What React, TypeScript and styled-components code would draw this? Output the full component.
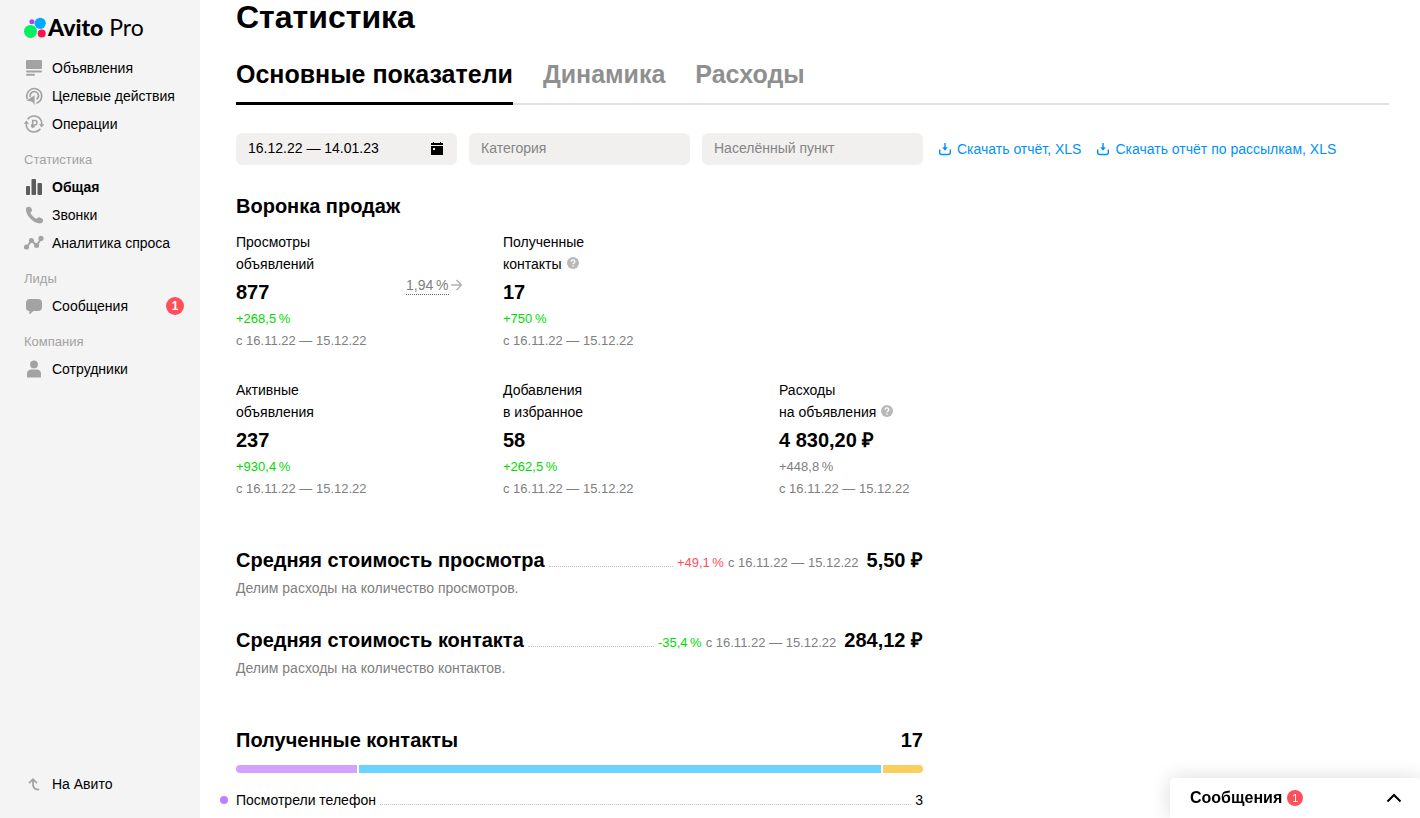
import React from "react";
import styled, { createGlobalStyle, css } from "styled-components";

const GlobalStyle = createGlobalStyle`
  *, *::before, *::after { box-sizing: border-box; }
  body {
    margin: 0;
    background: #fff;
    color: #000;
    font-family: "Liberation Sans", Arial, sans-serif;
    font-size: 14px;
    line-height: 22px;
  }
  h1, h2, p, ul, dl, dd { margin: 0; padding: 0; }
  ul { list-style: none; }
  a { color: inherit; text-decoration: none; }
  button, input { font: inherit; color: inherit; }
`;

const Page = styled.div`
  display: flex;
  min-height: 100vh;
`;

/* ---------- sidebar ---------- */

const Sidebar = styled.aside`
  position: sticky;
  top: 0;
  display: flex;
  flex-direction: column;
  flex: none;
  width: 200px;
  height: 100vh;
  padding: 14px 16px 20px 24px;
  background: #f4f4f4;
`;

const Logo = styled.a`
  display: flex;
  align-items: center;
  gap: 1px;
  height: 28px;
  margin-bottom: 12px;
  font: 400 23px/26px Lato, sans-serif;
  white-space: pre;

  span { height: 28px; }
  b { font-weight: 900; }
`;

const NavTitle = styled.h2`
  height: 35px;
  padding-top: 8px;
  color: #a3a3a3;
  font-size: 13px;
  font-weight: 400;
  line-height: 28px;
`;

const NavLink = styled.a<{ $active?: boolean }>`
  display: flex;
  align-items: center;
  gap: 8px;
  height: 28px;
  font-weight: ${(p) => (p.$active ? 700 : 400)};

  svg { flex: none; color: ${(p) => (p.$active ? "#5c5c5c" : "#a3a3a3")}; }
`;

const NavBottom = styled.div`
  margin-top: auto;
`;

const Badge = styled.span<{ $small?: boolean }>`
  display: inline-block;
  flex: none;
  width: ${(p) => (p.$small ? 16 : 18)}px;
  border-radius: 50%;
  background: #ff4f5a;
  color: #fff;
  font-size: ${(p) => (p.$small ? 11 : 12)}px;
  font-weight: ${(p) => (p.$small ? 400 : 700)};
  line-height: ${(p) => (p.$small ? 16 : 18)}px;
  text-align: center;
`;

const PushedBadge = styled(Badge)`
  margin-left: auto;
`;

/* ---------- main ---------- */

const Main = styled.main`
  flex: 1;
  min-width: 0;
  padding: 0 31px 7px 36px;
`;

const Title = styled.h1`
  margin-bottom: 24px;
  font-size: 32px;
  line-height: 34px;
`;

const Tabs = styled.nav`
  display: flex;
  gap: 30px;
  margin-bottom: 28px;
  border-bottom: 2px solid #e0e0e0;
`;

const Tab = styled.a<{ $active?: boolean }>`
  margin-bottom: -2px;
  padding-bottom: 12px;
  border-bottom: 3px solid ${(p) => (p.$active ? "#000" : "transparent")};
  color: ${(p) => (p.$active ? "#000" : "#8f8f8f")};
  font-size: 25px;
  font-weight: 700;
  line-height: 32px;
`;

const FilterBar = styled.form`
  display: flex;
  align-items: center;
  gap: 12px;
  margin-bottom: 27px;
`;

const Field = styled.label`
  display: flex;
  align-items: center;
  width: 221px;
  height: 32px;
  padding: 0 12px;
  border-radius: 6px;
  background: #f1f0ef;

  input {
    flex: 1;
    min-width: 0;
    height: 30px;
    padding: 0 0 2px;
    border: 0;
    outline: 0;
    background: none;
  }
  input::placeholder { color: #858585; opacity: 1; }
`;

const Downloads = styled.div`
  display: flex;
  gap: 15px;
  margin-left: 3px;
`;

const Download = styled.a`
  display: flex;
  align-items: center;
  gap: 5px;
  color: #0091fa;
  white-space: nowrap;
`;

const Content = styled.div`
  width: 687px;
`;

const Heading = styled.h2`
  font-size: 20px;
  line-height: 28px;
`;

const Funnel = styled.div`
  display: grid;
  grid-template-columns: 170px 97px 276px 1fr;
  row-gap: 28px;
  margin: 11px 0 47px;
`;

const MetricBox = styled.dl<{ $column: number }>`
  grid-column: ${(p) => p.$column};
  white-space: nowrap;
`;

const MetricLabel = styled.dt`
  svg { margin-left: 5px; }
`;

const Value = styled.dd`
  height: 32px;
  font-size: 20px;
  font-weight: 700;
  line-height: 34px;
`;

type Tone = "good" | "bad" | "neutral";
const tones: Record<Tone, string> = {
  good: "#00d900",
  bad: "#ff4f5a",
  neutral: "#808080",
};

const note = css`
  color: #808080;
  font-size: 13px;
`;

const Delta = styled.span<{ $tone: Tone }>`
  color: ${(p) => tones[p.$tone]};
  font-size: 13px;
`;

const Period = styled.span`
  ${note}
`;

const Stacked = styled.dd`
  height: 22px;
`;

const Conversion = styled.div`
  display: flex;
  align-items: center;
  gap: 2px;
  align-self: start;
  height: 18px;
  margin-top: 45px;
  color: #808080;

  abbr {
    border-bottom: 1px dotted #666;
    line-height: 18px;
    text-decoration: none;
  }
  svg { flex: none; }
`;

const Cost = styled.section`
  margin-bottom: 27px;
`;

const CostRow = styled.div`
  display: flex;
  align-items: baseline;
  margin-bottom: 3px;
  white-space: nowrap;

  ${Delta} { margin-right: 4px; }
  ${Period} { margin-right: 8px; }
`;

const Leader = styled.span`
  flex: 1;
  margin: 0 4px;
  border-bottom: 1px dotted #c2c2c2;
`;

const Total = styled.strong`
  font-size: 20px;
  line-height: 28px;
`;

const Description = styled.p`
  color: #808080;
`;

const Contacts = styled.section`
  margin-top: 47px;
`;

const ContactsHead = styled.div`
  display: flex;
  justify-content: space-between;
`;

const Bar = styled.div`
  display: flex;
  gap: 2px;
  height: 8px;
  margin: 11px 0 16px;
  border-radius: 4px;
  overflow: hidden;
`;

const Segment = styled.span<{ $share: number; $color: string }>`
  flex: ${(p) => p.$share} 0 0;
  background: ${(p) => p.$color};
`;

const LegendRow = styled.li`
  display: flex;
  align-items: baseline;
  margin-left: -16px;
`;

const Dot = styled.i`
  align-self: center;
  width: 8px;
  height: 8px;
  margin-right: 8px;
  border-radius: 50%;
  background: #c17fff;
`;

/* ---------- chat widget ---------- */

const Chat = styled.button`
  position: fixed;
  right: 0;
  bottom: 0;
  display: flex;
  align-items: center;
  gap: 5px;
  width: 250px;
  height: 40px;
  padding: 0 18px 0 20px;
  border: 0;
  border-radius: 4px 4px 0 0;
  background: #fff;
  box-shadow: 0 0 20px rgba(0, 0, 0, 0.15);
  font-size: 16px;
  font-weight: 700;
  cursor: pointer;

  svg { margin-left: auto; }
`;

/* ---------- icons ---------- */

const icons = {
  ads: (
    <g fill="currentColor">
      <rect x="2" y="2" width="16" height="9" rx="1" />
      <rect x="2" y="12.4" width="16" height="2" rx="1" />
      <rect x="2" y="15.8" width="9" height="2" rx="1" />
    </g>
  ),
  target: (
    <g fill="none" stroke="currentColor" strokeWidth="1.700" strokeLinecap="round">
      <path d="M3.200 12.500A7.500 7.500 0 1 1 13 17" />
      <path d="M6.300 10.500A4.100 4.100 0 1 1 13 12.800" />
      <path d="M10.600 9.200V19l-2.400-3.200-5.700-1.300Z" fill="currentColor" stroke="none" />
    </g>
  ),
  operations: (
    <g fill="none" stroke="currentColor" strokeWidth="1.600">
      <path d="M3.600 5.200A8 8 0 0 1 17.600 7.500" />
      <path d="M16.400 14.800A8 8 0 0 1 2.400 12.500V9" />
      <path d="M17.600 7.500V11" />
      <path d="M8.700 14V6.500h2.100a2.200 2.200 0 0 1 0 4.400H7M7 12.600h3.800" strokeWidth="1.500" />
      <path d="M15 10.200h5.200l-2.600 3.200zM-.2 9.800H5L2.400 6.600z" fill="currentColor" stroke="none" />
    </g>
  ),
  bars: (
    <g fill="currentColor">
      <rect x="2" y="9" width="4" height="9" rx="1" />
      <rect x="7.500" y="2" width="4.500" height="16" rx="1" />
      <rect x="13.500" y="6" width="4.500" height="12" rx="1" />
    </g>
  ),
  phone: (
    <path
      fill="currentColor"
      d="M2 3.500C2.300 2 4.500 1.400 5.900 1.700c.9.300 2.400 3.100 2.200 4-.2.900-1.500 1.300-1.600 2.100-.1 1.400 4.600 6 6 6 .9 0 1.300-1.500 2.200-1.600.9-.1 4.300 1.500 4.400 2.500.2 1.300-.6 3.400-2.200 3.600C9.900 19.300 1.200 10.300 2 3.500Z"
    />
  ),
  demand: (
    <g fill="currentColor">
      <path d="M2.500 14.500 7.500 7.500l5 5L17 6" fill="none" stroke="currentColor" strokeWidth="2" />
      <circle cx="2.500" cy="14" r="2.600" />
      <circle cx="7.400" cy="7.400" r="2.500" />
      <circle cx="12.600" cy="12.400" r="2.500" />
      <circle cx="17" cy="5.400" r="2.600" />
    </g>
  ),
  message: (
    <path
      fill="currentColor"
      d="M6 3h8a4 4 0 0 1 4 4v4a4 4 0 0 1-4 4H9.500L6 18q-1 .5-.8-.6L5.500 15A3.700 3.700 0 0 1 2 11V7a4 4 0 0 1 4-4Z"
    />
  ),
  person: (
    <g fill="currentColor">
      <circle cx="10" cy="5.400" r="3.900" />
      <path d="M3 18.500V15q0-4.500 4.500-4.500h5Q17 10.500 17 15v3.500Z" />
    </g>
  ),
  back: (
    <path
      d="M5 9.200 9 5.200l4 4M9 6v4.500q0 5 6.200 5.200"
      fill="none"
      stroke="currentColor"
      strokeWidth="1.800"
    />
  ),
};

const NavIcon = ({ name }: { name: keyof typeof icons }) => (
  <svg width="20" height="20" viewBox="0 0 20 20" overflow="visible" aria-hidden="true">
    {icons[name]}
  </svg>
);

const HelpIcon = () => (
  <svg width="12" height="12" viewBox="0 0 12 12" role="img" aria-label="Подсказка">
    <circle cx="6" cy="6" r="6" fill="#b8b8b8" />
    <path d="M4.200 4.700a1.800 1.700 0 1 1 2.700 1.400q-.9.500-.9 1.100" fill="none" stroke="#fff" strokeWidth="1.300" />
    <circle cx="6" cy="9" r=".8" fill="#fff" />
  </svg>
);

const DownloadIcon = () => (
  <svg width="14" height="14" viewBox="0 0 14 14" aria-hidden="true" fill="none" stroke="currentColor" strokeWidth="1.400">
    <path d="M1.700 7.500v3q0 2 2 2h6.600q2 0 2-2v-3M7 1v5" />
    <path d="M4.200 5.200h5.600L7 8.800Z" fill="currentColor" stroke="none" />
  </svg>
);

const CalendarIcon = () => (
  <svg width="16" height="16" viewBox="0 0 16 16" aria-hidden="true">
    <path
      fillRule="evenodd"
      d="M2 2h2V1h1v1h6V1h1v1h2v2H2ZM2 5h12v9H2ZM4 7v2h2V7Z"
    />
  </svg>
);

/* ---------- parts ---------- */

const PERIOD = "с 16.11.22 — 15.12.22";

type MetricProps = {
  column: number;
  label: [string, string];
  value: string;
  delta: string;
  tone?: Tone;
  help?: boolean;
};

const Metric = ({ column, label, value, delta, tone = "good", help }: MetricProps) => (
  <MetricBox $column={column}>
    <MetricLabel>
      {label[0]}
      <br />
      {label[1]}
      {help && <HelpIcon />}
    </MetricLabel>
    <Value>{value}</Value>
    <Stacked>
      <Delta $tone={tone}>{delta}</Delta>
    </Stacked>
    <Stacked>
      <Period>{PERIOD}</Period>
    </Stacked>
  </MetricBox>
);

type AverageProps = { title: string; delta: string; tone: Tone; total: string; text: string };

const Average = ({ title, delta, tone, total, text }: AverageProps) => (
  <Cost>
    <CostRow>
      <Heading>{title}</Heading>
      <Leader />
      <Delta $tone={tone}>{delta}</Delta>
      <Period>{PERIOD}</Period>
      <Total>{total}</Total>
    </CostRow>
    <Description>{text}</Description>
  </Cost>
);

export default function App() {
  return (
    <>
      <GlobalStyle />
      <Page>
        <Sidebar>
          <Logo href="#">
            <svg width="23" height="22" viewBox="0 0 23 22" aria-hidden="true">
              <circle cx="7.900" cy="4.700" r="2.500" fill="#a347ff" />
              <circle cx="16.200" cy="6.300" r="5.600" fill="#00aaff" />
              <circle cx="6.500" cy="14.400" r="6.500" fill="#04f061" />
              <circle cx="17.700" cy="16.400" r="4" fill="#ff1053" />
            </svg>
            <span>
              <b>Avito</b> Pro
            </span>
          </Logo>
          <nav>
            <NavLink href="#"><NavIcon name="ads" />Объявления</NavLink>
            <NavLink href="#"><NavIcon name="target" />Целевые действия</NavLink>
            <NavLink href="#"><NavIcon name="operations" />Операции</NavLink>
            <NavTitle>Статистика</NavTitle>
            <NavLink href="#" $active aria-current="page"><NavIcon name="bars" />Общая</NavLink>
            <NavLink href="#"><NavIcon name="phone" />Звонки</NavLink>
            <NavLink href="#"><NavIcon name="demand" />Аналитика спроса</NavLink>
            <NavTitle>Лиды</NavTitle>
            <NavLink href="#">
              <NavIcon name="message" />Сообщения
              <PushedBadge>1</PushedBadge>
            </NavLink>
            <NavTitle>Компания</NavTitle>
            <NavLink href="#"><NavIcon name="person" />Сотрудники</NavLink>
          </nav>
          <NavBottom>
            <NavLink href="#"><NavIcon name="back" />На Авито</NavLink>
          </NavBottom>
        </Sidebar>

        <Main>
          <Title>Статистика</Title>
          <Tabs>
            <Tab href="#" $active aria-current="page">Основные показатели</Tab>
            <Tab href="#">Динамика</Tab>
            <Tab href="#">Расходы</Tab>
          </Tabs>

          <FilterBar>
            <Field>
              <input type="text" aria-label="Период" defaultValue="16.12.22 — 14.01.23" />
              <CalendarIcon />
            </Field>
            <Field>
              <input type="text" aria-label="Категория" placeholder="Категория" />
            </Field>
            <Field>
              <input type="text" aria-label="Населённый пункт" placeholder="Населённый пункт" />
            </Field>
            <Downloads>
              <Download href="#"><DownloadIcon />Скачать отчёт, XLS</Download>
              <Download href="#"><DownloadIcon />Скачать отчёт по рассылкам, XLS</Download>
            </Downloads>
          </FilterBar>

          <Content>
            <Heading>Воронка продаж</Heading>
            <Funnel>
              <Metric column={1} label={["Просмотры", "объявлений"]} value="877" delta={"+268,5\u2009%"} />
              <Conversion>
                <abbr>{"1,94\u2009%"}</abbr>
                <svg width="11" height="12" viewBox="0 0 11 12" aria-hidden="true" fill="none" stroke="#b3b3b3" strokeWidth="1.500">
                  <path d="M0 6h10M5.500 1l5 5-5 5" />
                </svg>
              </Conversion>
              <Metric column={3} label={["Полученные", "контакты"]} value="17" delta={"+750\u2009%"} help />
              <Metric column={1} label={["Активные", "объявления"]} value="237" delta={"+930,4\u2009%"} />
              <Metric column={3} label={["Добавления", "в избранное"]} value="58" delta={"+262,5\u2009%"} />
              <Metric column={4} label={["Расходы", "на объявления"]} value="4 830,20 ₽" delta={"+448,8\u2009%"} tone="neutral" help />
            </Funnel>

            <Average
              title="Средняя стоимость просмотра"
              delta={"+49,1\u2009%"}
              tone="bad"
              total="5,50 ₽"
              text="Делим расходы на количество просмотров."
            />
            <Average
              title="Средняя стоимость контакта"
              delta={"-35,4\u2009%"}
              tone="good"
              total="284,12 ₽"
              text="Делим расходы на количество контактов."
            />

            <Contacts>
              <ContactsHead>
                <Heading>Полученные контакты</Heading>
                <Total>17</Total>
              </ContactsHead>
              <Bar>
                <Segment $share={3} $color="#d1a3ff" />
                <Segment $share={13} $color="#6bd3ff" />
                <Segment $share={1} $color="#fbce60" />
              </Bar>
              <ul>
                <LegendRow>
                  <Dot />
                  <span>Посмотрели телефон</span>
                  <Leader />
                  <span>3</span>
                </LegendRow>
              </ul>
            </Contacts>
          </Content>
        </Main>
      </Page>

      <Chat type="button">
        Сообщения
        <Badge $small>1</Badge>
        <svg width="16" height="10" viewBox="0 0 16 10" aria-hidden="true" fill="none" stroke="#000" strokeWidth="2">
          <path d="M1.500 8.500 8 2l6.500 6.500" />
        </svg>
      </Chat>
    </>
  );
}
